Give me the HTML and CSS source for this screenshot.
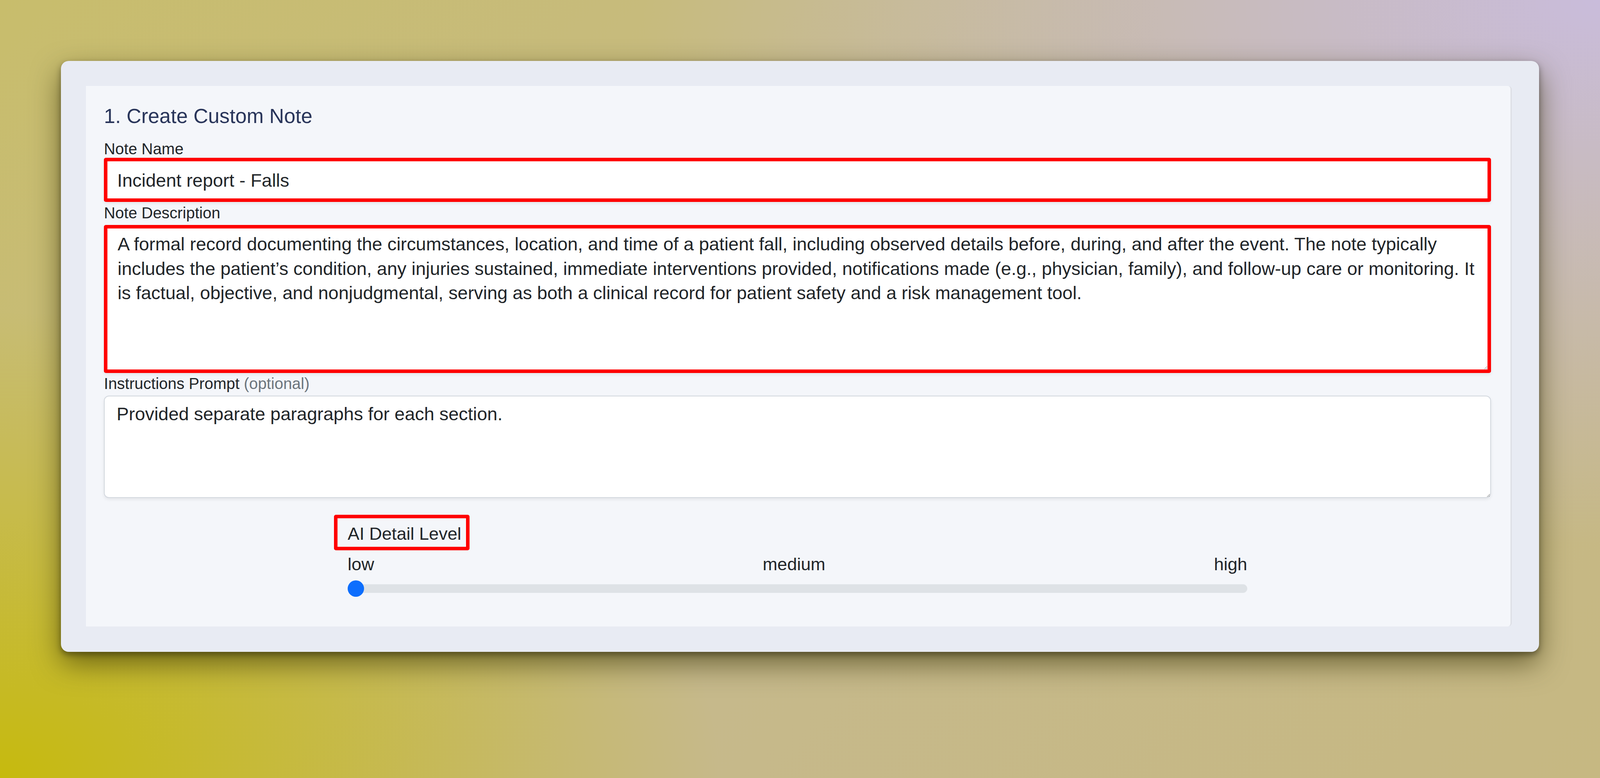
FILE: index.html
```html
<!DOCTYPE html>
<html lang="en">
<head>
  <meta charset="UTF-8" />
  <meta name="viewport" content="width=device-width, initial-scale=1.0"/>
  <title>Create Custom Note</title>
<link rel="stylesheet" href="styles.css">
</head>
<body>
  <div class="window">
    <div class="panel">
      <h5 class="panel-title">1. Create Custom Note</h5>

      <label class="field-label" for="noteName">Note Name</label>
      <input id="noteName" class="field field-name" type="text" value="Incident report - Falls">

      <label class="field-label" for="noteDesc">Note Description</label>
      <textarea id="noteDesc" class="field field-desc">A formal record documenting the circumstances, location, and time of a patient fall, including observed details before, during, and after the event. The note typically includes the patient’s condition, any injuries sustained, immediate interventions provided, notifications made (e.g., physician, family), and follow-up care or monitoring. It is factual, objective, and nonjudgmental, serving as both a clinical record for patient safety and a risk management tool.</textarea>

      <label class="field-label" for="notePrompt">Instructions Prompt <span class="muted">(optional)</span></label>
      <textarea id="notePrompt" class="field field-prompt">Provided separate paragraphs for each section.</textarea>

      <div class="detail">
        <div class="detail-title">AI Detail Level</div>
        <div class="detail-scale">
          <span>low</span>
          <span>medium</span>
          <span>high</span>
        </div>
        <input type="range" class="detail-range" min="0" max="2" step="1" value="0">
      </div>
    </div>
  </div>
</body>
</html>
```

FILE: styles.css
```css
:root {
  --text: #212529;
  --muted: #6c757d;
  --navy: #29355a;
  --mark: #ff0000;
  --window: #e8ebf3;
  --panel: #f4f6fa;
  --font: 'Liberation Sans', Arial, sans-serif;
}

html, body {
  height: 100%;
}

body {
  margin: 0;
  padding: 156px 156px 0;
  box-sizing: border-box;
  font-family: var(--font);
  color: var(--text);
  background:
    radial-gradient(ellipse 60% 70% at 100% 0%, #c9bcdb 0%, rgba(201, 188, 219, 0) 100%),
    radial-gradient(ellipse 45% 60% at 0% 100%, #c6ba0e 0%, rgba(198, 186, 14, 0) 100%),
    linear-gradient(135deg, #c8bd6c 0%, #c6b98c 55%, #c6b882 100%);
}

.window {
  background-color: var(--window);
  border-radius: 20px;
  padding: 64px 70px 65px 64px;
  box-shadow: 0 30px 72px rgba(50, 45, 0, 0.6), 0 7px 16px rgba(0, 0, 0, 0.4);
}

.panel {
  background-color: var(--panel);
  border-right: 3px solid #dcdee4;
  border-radius: 0 9px 9px 0;
  padding: 46px 50px 76px 46px;
}

.panel-title {
  margin: 0 0 32px;
  font-size: 52.2px;
  line-height: 62px;
  font-weight: 400;
  color: var(--navy);
}

.field-label {
  display: block;
  font-size: 40.3px;
  line-height: 44px;
}

.muted {
  color: var(--muted);
}

.field {
  display: block;
  width: 100%;
  box-sizing: border-box;
  font-family: var(--font);
  font-size: 46.9px;
  color: var(--text);
  background-color: #fff;
  border-radius: 5px;
  box-shadow: 0 4px 9px rgba(0, 0, 0, 0.07);
  outline: none;
}

.field-name {
  height: 113px;
  border: 9px solid var(--mark);
  padding: 2px 25px 0;
  margin-bottom: 7px;
}

textarea.field {
  line-height: 62.7px;
  resize: vertical;
}

.field-desc {
  height: 379px;
  margin: 8px 0 6px;
  border: 9px solid var(--mark);
  padding: 9px 16px 9px 26px;
}

.field-prompt {
  height: 262px;
  margin-top: 8px;
  border: 2.5px solid #d2d7de;
  border-radius: 13px;
  padding: 14px 30px 14px 30.5px;
}

.detail {
  width: 64.85%;
  margin: 43px auto 0;
}

.detail-title {
  display: inline-block;
  margin-left: -35px;
  border: 9px solid var(--mark);
  border-radius: 5px;
  padding: 6px 12px 0 26px;
  font-size: 45.1px;
  line-height: 67px;
}

.detail-scale {
  display: flex;
  justify-content: space-between;
  margin-top: 8px;
  font-size: 45.1px;
  line-height: 55px;
}

.detail-range {
  -webkit-appearance: none;
  appearance: none;
  display: block;
  width: 100%;
  height: 42px;
  margin: 14px 0 0;
  padding: 0;
  background: transparent;
}

.detail-range::-webkit-slider-runnable-track {
  height: 22px;
  border-radius: 11px;
  background-color: #dee2e6;
}

.detail-range::-webkit-slider-thumb {
  -webkit-appearance: none;
  width: 42px;
  height: 42px;
  margin-top: -10px;
  border: 0;
  border-radius: 50%;
  background-color: #0d6efd;
}
```
